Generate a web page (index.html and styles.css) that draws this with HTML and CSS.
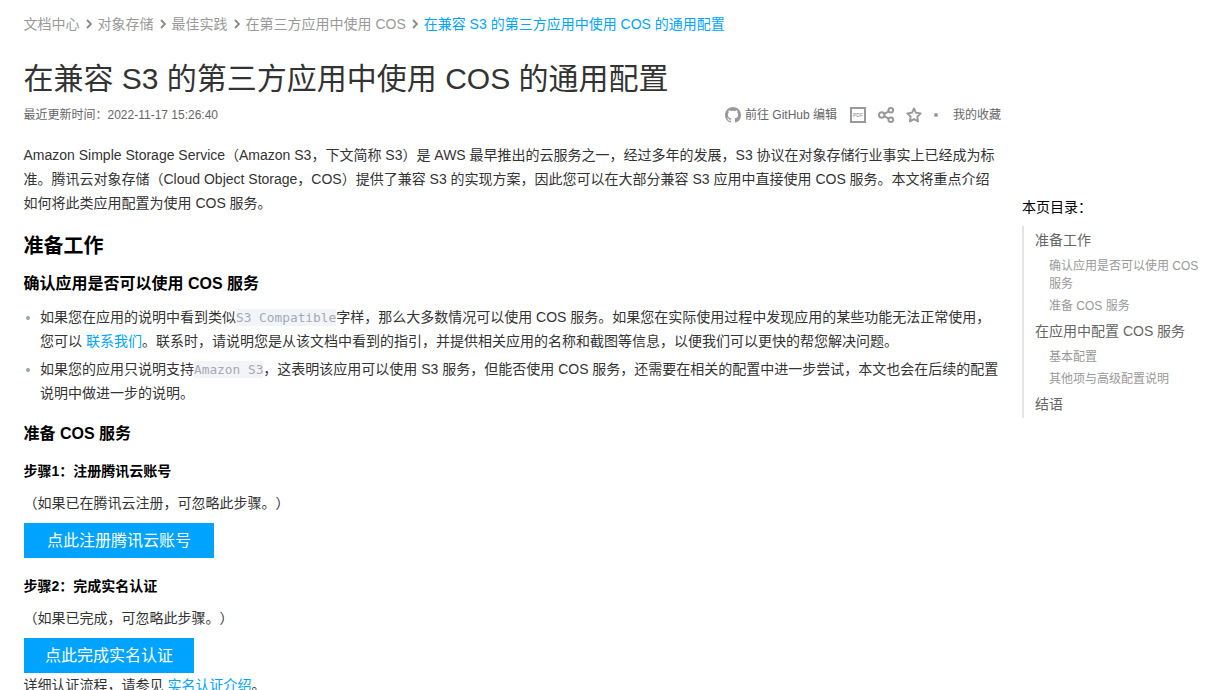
FILE: index.html
```html
<!DOCTYPE html>
<html lang="zh-CN">
<head>
<meta charset="utf-8">
<title>在兼容 S3 的第三方应用中使用 COS 的通用配置</title>
<link rel="stylesheet" href="styles.css">
</head>
<body>
<div class="page">
  <main class="article">
    <nav class="crumbs">
      <a>文档中心</a>
      <svg class="chev" viewBox="0 0 6 10"><path d="M1 1l4 4-4 4"/></svg>
      <a>对象存储</a>
      <svg class="chev" viewBox="0 0 6 10"><path d="M1 1l4 4-4 4"/></svg>
      <a>最佳实践</a>
      <svg class="chev" viewBox="0 0 6 10"><path d="M1 1l4 4-4 4"/></svg>
      <a>在第三方应用中使用 COS</a>
      <svg class="chev" viewBox="0 0 6 10"><path d="M1 1l4 4-4 4"/></svg>
      <a class="current">在兼容 S3 的第三方应用中使用 COS 的通用配置</a>
    </nav>
    <h1 class="title">在兼容 S3 的第三方应用中使用 COS 的通用配置</h1>
    <div class="meta">
      <span class="updated">最近更新时间：2022-11-17 15:26:40</span>
      <div class="tools">
        <svg class="icon github" viewBox="0 0 16 16"><path d="M8 0C3.58 0 0 3.58 0 8c0 3.54 2.29 6.53 5.47 7.59.4.07.55-.17.55-.38 0-.19-.01-.82-.01-1.49-2.01.37-2.53-.49-2.69-.94-.09-.23-.48-.94-.82-1.13-.28-.15-.68-.52-.01-.53.63-.01 1.08.58 1.23.82.72 1.21 1.87.87 2.33.66.07-.52.28-.87.51-1.07-1.78-.2-3.64-.89-3.64-3.95 0-.87.31-1.59.82-2.15-.08-.2-.36-1.02.08-2.12 0 0 .67-.21 2.2.82.64-.18 1.32-.27 2-.27s1.36.09 2 .27c1.53-1.04 2.2-.82 2.2-.82.44 1.1.16 1.92.08 2.12.51.56.82 1.27.82 2.15 0 3.07-1.87 3.75-3.65 3.95.29.25.54.73.54 1.48 0 1.07-.01 1.93-.01 2.2 0 .21.15.46.55.38A8.01 8.01 0 0 0 16 8c0-4.42-3.58-8-8-8z"/></svg>
        <span class="edit">前往 GitHub 编辑</span>
        <span class="pdf">PDF</span>
        <svg class="icon share" viewBox="0 0 17 16"><circle cx="3.7" cy="8" r="2.7"/><circle cx="12.8" cy="3.3" r="2.3"/><circle cx="12.8" cy="12.7" r="2.3"/><path d="M6.2 6.8l4.5-2.4M6.2 9.2l4.5 2.4"/></svg>
        <svg class="icon star" viewBox="0 0 16 16"><path d="M8 1.5l2 4.3 4.7.6-3.4 3.3.8 4.7L8 12.1l-4.1 2.3.8-4.7L1.3 6.4 6 5.8z"/></svg>
        <i class="sep"></i>
        <span>我的收藏</span>
      </div>
    </div>

    <p class="text intro">Amazon Simple Storage Service（Amazon S3，下文简称 S3）是 AWS 最早推出的云服务之一，经过多年的发展，S3 协议在对象存储行业事实上已经成为标<br>准。腾讯云对象存储（Cloud Object Storage，COS）提供了兼容 S3 的实现方案，因此您可以在大部分兼容 S3 应用中直接使用 COS 服务。本文将重点介绍<br>如何将此类应用配置为使用 COS 服务。</p>

    <h2 class="h2">准备工作</h2>
    <h3 class="h3">确认应用是否可以使用 COS 服务</h3>
    <ul class="list">
      <li>如果您在应用的说明中看到类似<code>S3 Compatible</code>字样，那么大多数情况可以使用 COS 服务。如果您在实际使用过程中发现应用的某些功能无法正常使用，<br>您可以 <a class="link">联系我们</a>。联系时，请说明您是从该文档中看到的指引，并提供相关应用的名称和截图等信息，以便我们可以更快的帮您解决问题。</li>
      <li>如果您的应用只说明支持<code>Amazon S3</code>，这表明该应用可以使用 S3 服务，但能否使用 COS 服务，还需要在相关的配置中进一步尝试，本文也会在后续的配置<br>说明中做进一步的说明。</li>
    </ul>
    <h3 class="h3">准备 COS 服务</h3>
    <section class="step">
      <h4 class="h4">步骤1：注册腾讯云账号</h4>
      <p class="text">（如果已在腾讯云注册，可忽略此步骤。）</p>
      <a class="btn register">点此注册腾讯云账号</a>
    </section>
    <section class="step">
      <h4 class="h4">步骤2：完成实名认证</h4>
      <p class="text">（如果已完成，可忽略此步骤。）</p>
      <a class="btn verify">点此完成实名认证</a>
      <p class="text">详细认证流程，请参见 <a class="link">实名认证介绍</a>。</p>
    </section>
  </main>

  <aside class="toc">
    <div class="toc-title">本页目录：</div>
    <div class="toc-list">
      <a class="item">准备工作</a>
      <a class="sub first">确认应用是否可以使用 COS 服务</a>
      <a class="sub">准备 COS 服务</a>
      <a class="item">在应用中配置 COS 服务</a>
      <a class="sub first">基本配置</a>
      <a class="sub">其他项与高级配置说明</a>
      <a class="item">结语</a>
    </div>
  </aside>
</div>
</body>
</html>
```
FILE: styles.css
```css
* { box-sizing: border-box; margin: 0; padding: 0; }

html, body { height: 690px; overflow: hidden; }

body {
  background: #fff;
  color: #333;
  font: 14px/24px "Liberation Sans", "Noto Sans CJK SC", sans-serif;
  text-spacing-trim: space-all;
}

.page { display: flex; gap: 20.5px; padding-left: 23.5px; height: 690px; overflow: hidden; }

.article { width: 978px; flex: none; white-space: nowrap; }

.crumbs { display: flex; align-items: center; gap: 6px; margin-top: 12px; height: 24px; color: #999; }
.crumbs .current { color: #00a4ff; }
.chev { width: 6px; height: 10px; fill: none; stroke: #888; stroke-width: 1.8; }

.title { margin-top: 23px; font-size: 30px; line-height: 40px; font-weight: 400; color: #333; }

.meta {
  display: flex;
  justify-content: space-between;
  align-items: center;
  margin-top: 6px;
  height: 20px;
  padding-right: 0.5px;
  font-size: 12px;
  line-height: 20px;
  color: #666;
}

.tools { display: flex; align-items: center; }
.icon { width: 16px; height: 16px; flex: none; }
.github { fill: #999; margin-right: 4px; }
.edit { width: 93px; margin-right: 12px; }
.pdf {
  width: 16px;
  height: 16px;
  border: 2px solid #999;
  color: #888;
  font-size: 5px;
  line-height: 12px;
  text-align: center;
}
.share { width: 17px; margin-left: 12px; fill: none; stroke: #999; stroke-width: 2; }
.star { margin-left: 11px; fill: none; stroke: #999; stroke-width: 1.9; stroke-linejoin: round; }
.sep { width: 4px; height: 4px; margin: 0 15px 0 12px; border-radius: 50%; background: #999; }

.text { line-height: 24px; }
.intro { margin-top: 18px; }

.h2 { margin-top: 16px; font-size: 20px; line-height: 30px; color: #000; }
.h3 { margin-top: 11px; font-size: 16px; line-height: 24px; color: #000; }

.list { list-style: none; margin: 9px 0 17px; }
.list li { position: relative; padding-left: 16.5px; }
.list li + li { margin-top: 4px; }
.list li::before {
  content: "";
  position: absolute;
  left: 2.5px;
  top: 11px;
  width: 4px;
  height: 4px;
  border-radius: 50%;
  background: #97a3b4;
}

code {
  padding: 1px 0;
  background: #f3f4f8;
  color: #a2a9b8;
  font: 12.8px/14px "DejaVu Sans Mono", monospace;
}

.link, .link:visited { color: #00a4ff; }

.h4 { margin-bottom: 8px; font-size: 14px; line-height: 24px; color: #000; }
.step { margin-top: 13px; }
.step + .step { margin-top: 16px; }

.btn {
  display: block;
  height: 35px;
  margin: 8px 0 0 0.5px;
  background: #00a4ff;
  color: #fff;
  font-size: 16px;
  line-height: 35px;
  text-align: center;
}
.register { width: 190px; }
.verify { width: 170px; }

.toc { width: 182px; flex: none; margin-top: 195px; }
.toc-title { line-height: 24px; color: #000; }
.toc-list {
  display: flex;
  flex-direction: column;
  margin-top: 7px;
  padding: 3px 0 3px 11px;
  border-left: 2px solid #e5e5e5;
}
.item { line-height: 22px; color: #666; }
.sub { margin: 4px 0 0 14px; font-size: 12px; line-height: 18px; color: #999; }
.sub.first { margin-top: 6px; }
.sub + .item { margin-top: 5px; }
```
